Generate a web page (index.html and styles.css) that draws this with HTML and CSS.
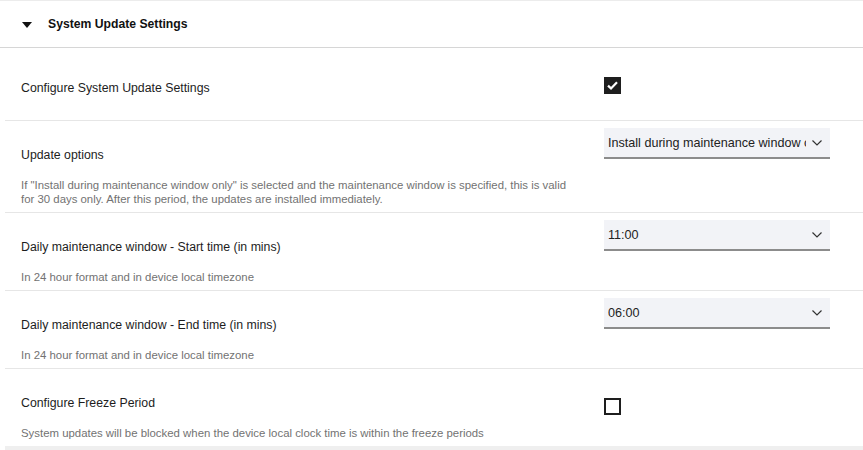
FILE: index.html
```html
<!DOCTYPE html>
<html lang="en">
<head>
  <meta charset="UTF-8">
  <meta name="viewport" content="width=device-width, initial-scale=1.0">
  <title>System Update Settings</title>
  <link rel="stylesheet" href="styles.css">
</head>
<body>
    <div class="panel">
        <div class="panel-header">
            <span class="caret"></span>
            <span class="panel-title">System Update Settings</span>
        </div>
        <div class="panel-body">
            <div class="row row-first">
                <div class="row-text">
                    <div class="label">Configure System Update Settings</div>
                </div>
                <div class="row-control">
                    <span class="checkbox checked">
                        <svg width="11" height="9" viewBox="0 0 11 9"><path d="M1 4.6 L4 7.4 L10 1.2" fill="none" stroke="#fff" stroke-width="2.2"/></svg>
                    </span>
                </div>
            </div>
            <div class="row">
                <div class="row-text">
                    <div class="label">Update options</div>
                    <div class="help">If "Install during maintenance window only" is selected and the maintenance window is specified, this is valid for 30 days only. After this period, the updates are installed immediately.</div>
                </div>
                <div class="row-control pad-select">
                    <div class="select">
                        <span class="select-value">Install during maintenance window only</span>
                        <svg class="chevron" width="10" height="6" viewBox="0 0 10 6"><path d="M0.5 0.5 L5 5 L9.5 0.5" fill="none" stroke="#333" stroke-width="1.2"/></svg>
                    </div>
                </div>
            </div>
            <div class="row">
                <div class="row-text">
                    <div class="label">Daily maintenance window - Start time (in mins)</div>
                    <div class="help">In 24 hour format and in device local timezone</div>
                </div>
                <div class="row-control pad-select">
                    <div class="select">
                        <span class="select-value">11:00</span>
                        <svg class="chevron" width="10" height="6" viewBox="0 0 10 6"><path d="M0.5 0.5 L5 5 L9.5 0.5" fill="none" stroke="#333" stroke-width="1.2"/></svg>
                    </div>
                </div>
            </div>
            <div class="row">
                <div class="row-text">
                    <div class="label">Daily maintenance window - End time (in mins)</div>
                    <div class="help">In 24 hour format and in device local timezone</div>
                </div>
                <div class="row-control pad-select">
                    <div class="select">
                        <span class="select-value">06:00</span>
                        <svg class="chevron" width="10" height="6" viewBox="0 0 10 6"><path d="M0.5 0.5 L5 5 L9.5 0.5" fill="none" stroke="#333" stroke-width="1.2"/></svg>
                    </div>
                </div>
            </div>
            <div class="row">
                <div class="row-text">
                    <div class="label">Configure Freeze Period</div>
                    <div class="help">System updates will be blocked when the device local clock time is within the freeze periods</div>
                </div>
                <div class="row-control">
                    <span class="checkbox"></span>
                </div>
            </div>
        </div>
        <div class="panel-footer"></div>
    </div>
</body>
</html>
```

FILE: styles.css
```css
body {
    margin: 0;
    font-family: "Liberation Sans", Arial, sans-serif;
    background-color: #fff;
    color: #222;
}
.panel {
    width: 863px;
    border-top: 1px solid #ececec;
}
.panel-header {
    display: flex;
    align-items: center;
    height: 46px;
    border-bottom: 1px solid #d6d6d6;
}
.caret {
    width: 0;
    height: 0;
    margin-left: 22px;
    margin-right: 16px;
    margin-top: 2px;
    border-left: 5px solid transparent;
    border-right: 5px solid transparent;
    border-top: 6px solid #111;
}
.panel-title {
    font-size: 12.2px;
    font-weight: bold;
    color: #111;
}
.panel-body {
    margin-left: 5px;
}
.row {
    display: flex;
    padding-left: 16px;
    border-bottom: 1px solid #e6e6e6;
}
.row:last-child {
    border-bottom: none;
}
.row-text {
    width: 552px;
    margin-right: 31px;
    padding-top: 26px;
    padding-bottom: 6px;
}
.row-first .row-text {
    padding-top: 32px;
    padding-bottom: 24px;
}
.label {
    font-size: 12.3px;
    line-height: 16px;
    color: #1d1d1d;
}
.help {
    margin-top: 15px;
    font-size: 11.4px;
    line-height: 14px;
    color: #727272;
}
.row-control {
    width: 226px;
}
.pad-select {
    padding-top: 7px;
}
.checkbox {
    display: flex;
    justify-content: center;
    align-items: center;
    box-sizing: border-box;
    width: 17px;
    height: 17px;
    margin-top: 29px;
    border: 2px solid #1e1e1e;
}
.checkbox.checked {
    background-color: #1e1e1e;
}
.select {
    display: flex;
    align-items: center;
    height: 29px;
    background-color: #f2f3f7;
    border-bottom: 2px solid #8c8c8c;
    padding-left: 4px;
    padding-right: 8px;
}
.select-value {
    flex: 1;
    overflow: hidden;
    white-space: nowrap;
    font-size: 12.6px;
    color: #222;
    margin-right: 6px;
}
.chevron {
    flex: none;
}
.panel-footer {
    height: 4px;
    background-color: #efefef;
    margin-left: 5px;
}
```
